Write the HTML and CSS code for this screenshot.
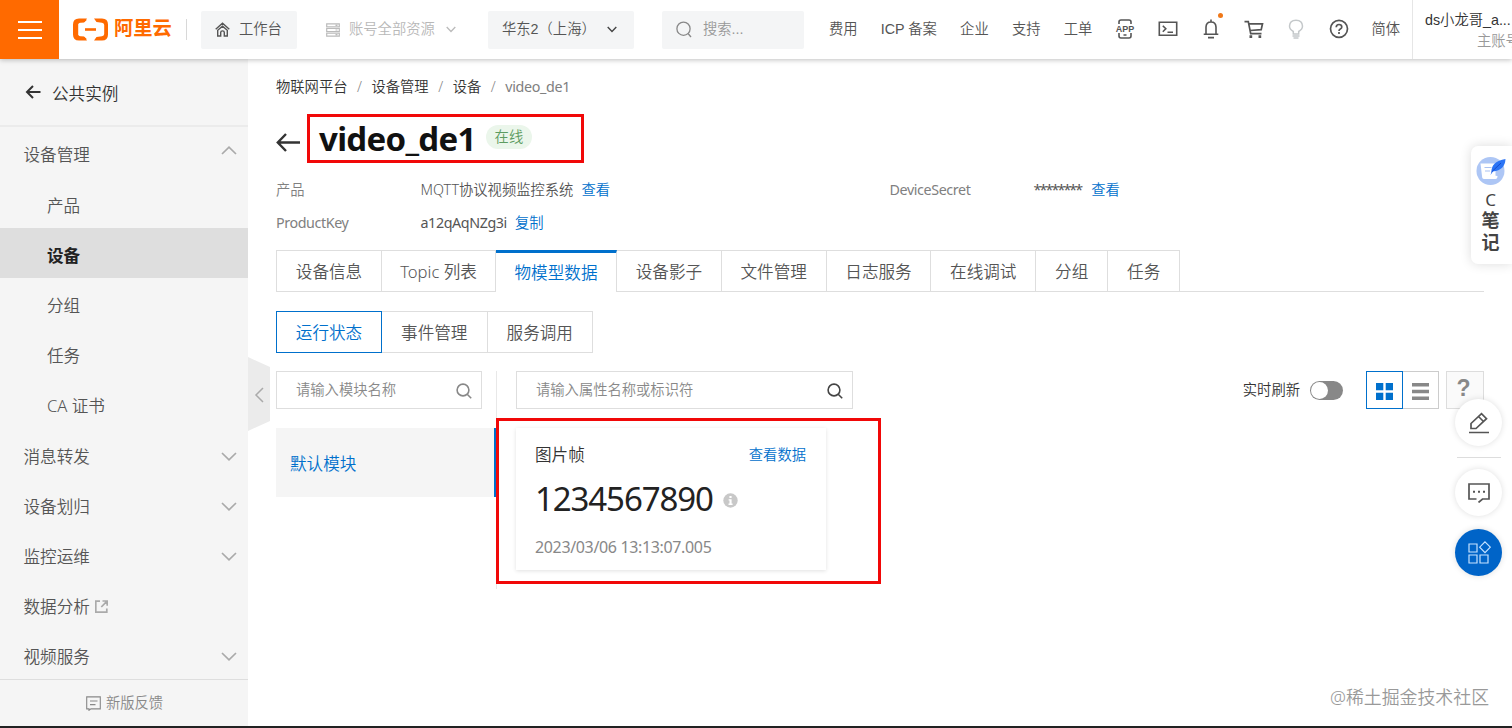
FILE: index.html
```html
<!DOCTYPE html>
<html lang="zh-CN">
<head>
  <meta charset="UTF-8">
  <meta name="viewport" content="width=device-width, initial-scale=1.0">
  <title>物联网平台 - 设备详情</title>
  <link rel="stylesheet" href="styles.css">
</head>
<body>
  <header class="topbar">
    <button class="menu-btn" aria-label="菜单"><span></span><span></span><span></span></button>
    <a class="logo">
      <svg width="35" height="23" viewBox="0 0 35 23" fill="none" stroke="#ff6a00">
        <path d="M14 1.800H7.500L2.200 5v13l5.300 3.200H14L11 18.500H7L5.200 17V6L7 4.500h4z" fill="#ff6a00" stroke="none"/>
        <path d="M14 .5H6Q0 .5 0 6.500v10q0 6 6 6h8l-2.500-3.500-5.500-.8Q3.800 17.800 3.800 16V7q0-1.800 2.200-2.200L11.500 4z" fill="#ff6a00" stroke="none"/>
        <path d="M21 .5h8q6 0 6 6v10q0 6-6 6h-8l2.500-3.500 5.500-.8q2.200-.4 2.200-2.200V7q0-1.800-2.200-2.200L23.500 4z" fill="#ff6a00" stroke="none"/>
        <path d="M12 11.500h11" stroke-width="2.600"/>
      </svg>
      <span>阿里云</span>
    </a>
    <i class="divider"></i>
    <a class="pill workbench">
      <svg width="15" height="15" viewBox="0 0 15 15" fill="none" stroke="#555" stroke-width="1.400">
        <path d="M.7 7.200 7.500 1.200l6.800 6M2.700 8v6h3v-3.500q0-1.600 1.800-1.600t1.800 1.600V14h3V8M2.700 8.200l4.800-4 4.800 4"/>
      </svg>
      <span>工作台</span>
    </a>
    <div class="resource">
      <svg width="14" height="14" viewBox="0 0 14 14" fill="none" stroke="#bbb" stroke-width="1.200">
        <path d="M.7.900h12.600v3H.7zM.7 5.500h12.600v3H.7zM.7 10.100h12.600v3H.7zM9.500 2.400h2M9.500 7h2M9.500 11.600h2"/>
      </svg>
      <span>账号全部资源</span>
      <svg class="caret" width="10" height="7" viewBox="0 0 10 7" fill="none" stroke="#bbb" stroke-width="1.300"><path d="m.7 1 4.300 4.500L9.300 1"/></svg>
    </div>
    <div class="pill region">
      <span>华东2（上海）</span>
      <svg width="10" height="7" viewBox="0 0 10 7" fill="none" stroke="#444" stroke-width="1.400"><path d="m.7 1 4.300 4.500L9.300 1"/></svg>
    </div>
    <div class="pill search">
      <svg width="16" height="17" viewBox="0 0 16 17" fill="none" stroke="#888" stroke-width="1.300"><circle cx="7.500" cy="7.700" r="6.600"/><path d="m12 12.500 3 3.500"/></svg>
      <span>搜索...</span>
    </div>
    <nav class="top-nav">
      <a>费用</a>
      <a>ICP 备案</a>
      <a>企业</a>
      <a>支持</a>
      <a>工单</a>
      <a class="icon">
        <svg width="20" height="20" viewBox="0 0 20 20" fill="none" stroke="#555" stroke-width="1.600">
          <path d="M4 5V3q0-2 2-2h8q2 0 2 2v2M4 14v3q0 2 2 2h8q2 0 2-2v-3M8.500 16h3"/>
          <text x="10" y="12.700" text-anchor="middle" class="app-text">APP</text>
        </svg>
      </a>
      <a class="icon">
        <svg width="20" height="20" viewBox="0 0 20 20" fill="none" stroke="#555" stroke-width="1.600"><path d="M1.300 3.300h17.400v13H1.300zM4.800 6.800l3 3-3 3M9.500 13.200h5.500"/></svg>
      </a>
      <a class="icon">
        <svg width="20" height="20" viewBox="0 0 20 20" fill="none" stroke="#555" stroke-width="1.600"><path d="M10 .5v2M5 15.300V8Q5.200 3 10 3t5 5v7.300M2.700 15.300h14.600M7 18.600h6"/></svg>
        <b class="dot"></b>
      </a>
      <a class="icon">
        <svg width="20" height="20" viewBox="0 0 20 20" fill="none" stroke="#555" stroke-width="1.700"><path d="M.5 2.600h3.800l2.400 12h10.800M4.800 4.800h13.700l-1.300 5.800L6 11.500"/><path d="M5.500 16.200h2.700v2.700H5.500zM14.500 16.200h2.700v2.700h-2.700z" fill="#555" stroke="none"/></svg>
      </a>
      <a class="icon">
        <svg width="20" height="20" viewBox="0 0 20 20" fill="none" stroke="#c4c8ca" stroke-width="1.500"><path d="M7.300 15v-2.500Q3.500 10.500 3.500 7.100 3.700 1.200 10 1.200t6.500 5.900q0 3.400-3.800 5.400V15zM6.500 17h7M7.500 19h5"/></svg>
      </a>
      <a class="icon">
        <svg width="20" height="20" viewBox="0 0 20 20" fill="none" stroke="#555" stroke-width="1.700"><circle cx="10" cy="9.800" r="8.500"/><path d="M7.200 8.200Q7.300 5.500 10 5.500t2.800 2.500q0 1.200-1.500 2.100-1.300.8-1.300 2M10 13v2"/></svg>
      </a>
      <a>简体</a>
    </nav>
    <div class="account">
      <span class="account-name">ds小龙哥_a...</span>
      <span class="account-type">主账号</span>
    </div>
  </header>

  <div class="layout">
    <aside class="sidebar">
      <div class="instance">
        <svg width="16" height="14" viewBox="0 0 16 14" fill="none" stroke="#333" stroke-width="2"><path d="M15.500 7H2M8 1 2 7l6 6"/></svg>
        <span>公共实例</span>
      </div>
      <ul class="menu">
        <li class="group open"><span>设备管理</span><svg width="16" height="9" viewBox="0 0 16 9"><path d="m1 8 7-6.800L15 8"/></svg></li>
        <li class="sub">产品</li>
        <li class="sub active">设备</li>
        <li class="sub">分组</li>
        <li class="sub">任务</li>
        <li class="sub">CA 证书</li>
        <li class="group"><span>消息转发</span><svg width="16" height="9" viewBox="0 0 16 9"><path d="m1 1 7 6.800L15 1"/></svg></li>
        <li class="group"><span>设备划归</span><svg width="16" height="9" viewBox="0 0 16 9"><path d="m1 1 7 6.800L15 1"/></svg></li>
        <li class="group"><span>监控运维</span><svg width="16" height="9" viewBox="0 0 16 9"><path d="m1 1 7 6.800L15 1"/></svg></li>
        <li class="group link"><span>数据分析</span><svg width="13" height="13" viewBox="0 0 13 13"><path d="M5 1.200H.8v11h11V8.500M7.500 1h4.700v4.700M12 1.200 6.300 7"/></svg></li>
        <li class="group"><span>视频服务</span><svg width="16" height="9" viewBox="0 0 16 9"><path d="m1 1 7 6.800L15 1"/></svg></li>
      </ul>
      <div class="feedback">
        <svg width="15" height="15" viewBox="0 0 15 15" fill="none" stroke="#888" stroke-width="1.100"><path d="M.7.900h13.600v12H5L3 14.300v-1.400H.7zM4 5h7.500M4 8.600h5.500"/></svg>
        <span>新版反馈</span>
      </div>
      <div class="collapse">
        <svg width="22" height="74" viewBox="0 0 22 74"><path d="M0 0 22 10v54L0 74z" fill="#ebebeb"/><path d="m15 31-7 7 7 7" fill="none" stroke="#aaa" stroke-width="1.500"/></svg>
      </div>
    </aside>

    <main class="content">
      <div class="breadcrumb">
        <a>物联网平台</a><i>/</i><a>设备管理</a><i>/</i><a>设备</a><i>/</i><span>video_de1</span>
      </div>
      <div class="title-row">
        <svg width="24" height="19" viewBox="0 0 24 19" fill="none" stroke="#333" stroke-width="2.400"><path d="M24 9.500H2M10 1 1.800 9.500 10 18"/></svg>
        <div class="title-box">
          <h1>video_de1</h1>
          <span class="status">在线</span>
        </div>
      </div>
      <dl class="info">
        <dt>产品</dt>
        <dd><span>MQTT协议视频监控系统</span><a>查看</a></dd>
        <dt class="latin">DeviceSecret</dt>
        <dd><span class="secret">********</span><a>查看</a></dd>
        <dt class="latin">ProductKey</dt>
        <dd><span class="latin">a12qAqNZg3i</span><a>复制</a></dd>
      </dl>

      <div class="tabs">
        <a>设备信息</a>
        <a class="topic">Topic 列表</a>
        <a class="active">物模型数据</a>
        <a>设备影子</a>
        <a>文件管理</a>
        <a>日志服务</a>
        <a>在线调试</a>
        <a>分组</a>
        <a>任务</a>
      </div>
      <div class="sub-tabs">
        <a class="active">运行状态</a>
        <a>事件管理</a>
        <a>服务调用</a>
      </div>

      <div class="panel">
        <section class="modules">
          <div class="input">
            <span>请输入模块名称</span>
            <svg width="16" height="16" viewBox="0 0 16 16" fill="none" stroke="#888" stroke-width="1.600"><circle cx="7" cy="7" r="5.900"/><path d="m11.200 11.200 4 4"/></svg>
          </div>
          <div class="module-item">默认模块</div>
        </section>
        <section class="props">
          <div class="toolbar">
            <div class="input prop-input">
              <span>请输入属性名称或标识符</span>
              <svg width="16" height="16" viewBox="0 0 16 16" fill="none" stroke="#444" stroke-width="1.600"><circle cx="7" cy="7" r="5.900"/><path d="m11.200 11.200 4 4"/></svg>
            </div>
            <div class="actions">
              <span>实时刷新</span>
              <i class="switch"></i>
              <button class="view-btn active"><svg width="17" height="17" viewBox="0 0 17 17" fill="#0070cc"><path d="M0 0h7.300v7.300H0zM9.700 0H17v7.300H9.700zM0 9.700h7.300V17H0zM9.700 9.700H17V17H9.700z"/></svg></button>
              <button class="view-btn list"><svg width="17" height="17" viewBox="0 0 17 17" fill="#888"><path d="M0 0h17v3.500H0zM0 6.700h17v3.500H0zM0 13.400h17v3.500H0z"/></svg></button>
              <button class="view-btn help">?</button>
            </div>
          </div>
          <div class="card">
            <div class="card-head"><span>图片帧</span><a>查看数据</a></div>
            <div class="card-value">
              <strong>1234567890</strong>
              <svg width="15" height="15" viewBox="0 0 15 15"><circle cx="7.500" cy="7.500" r="7.200" fill="#c8c8c8"/><path d="M6.400 3h2.200v2H6.400zM5.600 6.200h3v4.400h1V12H5.500v-1.400h1V7.500h-.9z" fill="#fff"/></svg>
            </div>
            <div class="card-time">2023/03/06 13:13:07.005</div>
            <div class="mark"></div>
          </div>
        </section>
      </div>
    </main>
  </div>
  <div class="bottom-line"></div>

  <!-- floating tools -->
  <div class="note">
    <svg width="30" height="28" viewBox="0 0 30 28">
      <circle cx="14.500" cy="14" r="14" fill="#adc6f5"/>
      <path d="M4.500 6.500h15v12.300l2 .2q0 3-2 3H8q-2 0-2-3z" fill="#fff"/>
      <path d="M8.500 10.500h7M9 14h5" stroke="#a9c2f2" stroke-width="1.200"/>
      <path d="M15.500 15Q15 4.500 29.500 2q-.5 11-12.500 12.500L14.500 18z" fill="#2b74f5"/>
      <path d="M15.500 15 25 6" stroke="#174bcd" stroke-width="1"/>
    </svg>
    <span>C</span>
    <b>笔</b>
    <b>记</b>
  </div>
  <div class="float-tools">
    <a class="circle">
      <svg width="22" height="22" viewBox="0 0 22 22" fill="none" stroke="#555" stroke-width="1.700"><path d="M1 20.500h20M3 16.500v-5L13.500 1.700l5 5L8 16.500zM10.500 4.500l5 5"/></svg>
    </a>
    <i class="float-line"></i>
    <a class="circle">
      <svg width="22" height="20" viewBox="0 0 22 20" fill="none" stroke="#555" stroke-width="1.700"><path d="M8.500 16H1V1h20v15h-6.500L10.500 19.500"/><path d="M5 8.700h2M10 8.700h2M15 8.700h2" stroke-width="2"/></svg>
    </a>
    <a class="circle apps">
      <svg width="24" height="24" viewBox="0 0 24 24" fill="none" stroke="#c5e2ff" stroke-width="1.200"><path d="M2 3h8v8H2zM2 14h8v8H2zM13 14h8v8h-8zM18 .8l5.300 5.400-5.300 5.400-5.300-5.400z"/></svg>
    </a>
  </div>
  <div class="watermark">@稀土掘金技术社区</div>
</body>
</html>
```
FILE: styles.css
```css
:root {
  --blue: #0070cc;
  --orange: #ff6a00;
  --red: #f10808;
  --text: #333;
  --text-muted: #808080;
  --border: #dedede;
}

* {
  box-sizing: border-box;
}

body {
  margin: 0;
  width: 1512px;
  height: 728px;
  overflow: hidden;
  position: relative;
  background: #fff;
  color: var(--text);
  font-family: "Noto Sans", "Noto Sans CJK SC", sans-serif;
  font-size: 14.3px;
  font-weight: 350;
  line-height: 20px;
  white-space: nowrap;
}

svg {
  display: block;
  flex: none;
}

i {
  font-style: normal;
}

a {
  cursor: pointer;
}

button {
  padding: 0;
  border: none;
  border-radius: 0;
}

/* top bar */
.topbar {
  display: flex;
  align-items: center;
  height: 59px;
  position: relative;
  z-index: 2;
  background: #fff;
  box-shadow: 0 1px 5px rgba(0, 0, 0, 0.25);
  color: #555;
  font-family: "Liberation Sans", "Noto Sans CJK SC", sans-serif;
}

.topbar > * > span,
.top-nav > a {
  margin-top: -1px;
}

.menu-btn {
  display: flex;
  flex-direction: column;
  align-items: center;
  justify-content: center;
  gap: 6px;
  width: 59px;
  height: 59px;
  background: var(--orange);
}

.menu-btn span {
  width: 24px;
  height: 2px;
  margin: 0;
  background: #fff;
}

.logo {
  display: flex;
  align-items: center;
  gap: 6px;
  margin-left: 14px;
  width: 113px;
  color: var(--orange);
  font-size: 19.3px;
  font-weight: 700;
}

.divider {
  width: 1px;
  height: 21px;
  background: #d8d8d8;
}

.pill {
  display: flex;
  align-items: center;
  height: 38px;
  background: #f4f5f6;
  border-radius: 2px;
}

.workbench {
  gap: 9px;
  width: 96px;
  margin-left: 14px;
  padding-left: 14px;
}

.resource {
  display: flex;
  align-items: center;
  gap: 9px;
  width: 191px;
  padding-left: 29px;
  color: #b8b8b8;
}

.caret {
  margin-left: 2px;
}

.region {
  justify-content: space-between;
  width: 146px;
  padding: 0 17px 0 14px;
}

.search {
  gap: 11px;
  width: 142px;
  margin-left: 28px;
  padding-left: 14px;
  color: #999;
}

.top-nav {
  display: flex;
  align-items: center;
  gap: 23.2px;
  width: 583px;
  margin-left: 25px;
}

.icon {
  width: 19.5px;
  position: relative;
}

.app-text {
  font-size: 9px;
  font-weight: 700;
  fill: #555;
  stroke: none;
}

.dot {
  position: absolute;
  top: -6px;
  right: -3px;
  width: 5px;
  height: 5px;
  border-radius: 50%;
  background: #f07818;
}

.account {
  flex: 1;
  min-width: 0;
  height: 59px;
  padding: 11px 0 0 12px;
  overflow: hidden;
  border-left: 1px solid #e6e6e6;
}

.account-name {
  display: block;
  color: #333;
}

.account-type {
  display: block;
  padding: 2px 0 0 52px;
  color: #999;
}

/* sidebar */
.layout {
  display: flex;
  height: 667px;
}

.sidebar {
  display: flex;
  flex-direction: column;
  flex: none;
  width: 248px;
  position: relative;
  background: #f5f5f5;
  font-size: 16.6px;
}

.instance {
  display: flex;
  align-items: center;
  gap: 11px;
  height: 69px;
  padding: 3px 0 0 25px;
  border-bottom: 2px solid #ebebeb;
}

.instance svg {
  margin-top: -3px;
}

.menu {
  flex: 1;
  margin: 0;
  padding: 0;
  list-style: none;
  color: #555;
}

.menu li {
  display: flex;
  align-items: center;
  height: 50.2px;
  padding-top: 6px;
}

.group {
  justify-content: space-between;
  padding: 0 11px 0 23.5px;
}

.group svg {
  margin-top: -1px;
  fill: none;
  stroke: #aaa;
  stroke-width: 1.7;
}

.open svg {
  margin-top: -10px;
}

.menu .link {
  justify-content: flex-start;
  gap: 5px;
}

.menu .sub {
  padding-left: 47px;
}

.menu .active {
  background: #dedede;
  color: #222;
  font-weight: 700;
}

.feedback {
  display: flex;
  align-items: center;
  justify-content: center;
  gap: 5px;
  height: 47px;
  padding-left: 1px;
  border-top: 1px solid #dedede;
  color: #888;
  font-size: 14.3px;
}

.collapse {
  position: absolute;
  left: 248px;
  top: 298px;
}

/* content */
.content {
  flex: 1;
  padding: 18px 28px 0;
}

.breadcrumb {
  display: flex;
}

.breadcrumb i {
  width: 24px;
  text-align: center;
  color: #888;
}

.breadcrumb span {
  color: var(--text-muted);
  font-weight: 400;
  letter-spacing: -0.35px;
}

.title-row {
  display: flex;
  align-items: center;
  height: 49px;
  margin-top: 17px;
  gap: 7px;
}

.title-row > svg {
  margin-top: 8px;
}

.title-box {
  display: flex;
  align-items: center;
  gap: 10px;
  width: 277px;
  height: 49px;
  padding-left: 9px;
  border: 3px solid var(--red);
}

h1 {
  margin: 0;
  color: #111;
  font-size: 33px;
  line-height: 43px;
  font-weight: 700;
  letter-spacing: -0.7px;
}

.status {
  height: 24px;
  margin-top: -4px;
  padding: 0 9px;
  border-radius: 12px;
  background: #ebf6eb;
  color: #5d9c61;
  line-height: 24px;
}

.info {
  display: grid;
  grid-template-columns: 144.5px 469px 144px 1fr;
  row-gap: 13px;
  margin: 17px 0 0;
}

.info dt {
  color: var(--text-muted);
}

.info dd {
  display: flex;
  gap: 8px;
  margin: 0;
  color: #555;
}

.latin {
  font-weight: 400;
  letter-spacing: -0.4px;
}

.secret {
  font-weight: 400;
  letter-spacing: -1.9px;
  margin-right: 2px;
}

.info a,
.card a {
  color: var(--blue);
}

.tabs {
  display: flex;
  height: 42px;
  margin-top: 17px;
  border-bottom: 1px solid var(--border);
  font-size: 16.6px;
}

.tabs a,
.sub-tabs a {
  display: flex;
  align-items: center;
  justify-content: center;
  width: 104.8px;
  padding-top: 2px;
  border: 1px solid var(--border);
  border-width: 1px 1px 0 0;
  color: #555;
}

.tabs a:first-child {
  width: 106px;
  border-left-width: 1px;
}

.tabs a:nth-last-child(-n+2) {
  width: 72px;
}

.tabs .topic {
  width: 114px;
}

.tabs .active {
  width: 121px;
  height: 42px;
  padding: 0;
  border-top: 3px solid var(--blue);
  background: #fff;
  color: var(--blue);
}

.sub-tabs {
  display: flex;
  height: 42px;
  margin-top: 19px;
  font-size: 16.6px;
}

.sub-tabs a {
  width: 105.5px;
  border-width: 1px 1px 1px 0;
}

.sub-tabs .active {
  width: 106px;
  border: 1px solid var(--blue);
  color: var(--blue);
}

.panel {
  display: flex;
  height: 218px;
  margin-top: 18px;
}

.modules {
  width: 221px;
  border-right: 1px solid #e8e8e8;
}

.input {
  display: flex;
  align-items: center;
  justify-content: space-between;
  width: 206px;
  height: 38px;
  padding: 0 9px 0 19px;
  border: 1px solid var(--border);
  color: #888;
}

.input svg {
  margin-top: 2px;
}

.prop-input {
  width: 337px;
}

.module-item {
  width: 221px;
  height: 69px;
  margin-top: 19px;
  padding-left: 14px;
  background: #f5f5f5;
  border-right: 3px solid var(--blue);
  color: var(--blue);
  font-size: 16.6px;
  line-height: 72px;
}

.props {
  flex: 1;
  padding-left: 19px;
}

.toolbar {
  display: flex;
  justify-content: space-between;
}

.actions {
  display: flex;
  align-items: center;
}

.switch {
  width: 33px;
  height: 19px;
  margin: 0 23px 0 10px;
  padding: 1px;
  border-radius: 10px;
  background: #888;
}

.switch::before {
  content: "";
  display: block;
  width: 17px;
  height: 17px;
  border-radius: 50%;
  background: #fff;
}

.view-btn {
  display: flex;
  align-items: center;
  justify-content: center;
  width: 37px;
  height: 38px;
  border: 1px solid #ccc;
  background: #fff;
}

.view-btn svg {
  margin-top: 3px;
}

.view-btn.active {
  border-color: var(--blue);
}

.view-btn.list {
  width: 36px;
  border-left: none;
}

.view-btn.help {
  width: 38px;
  margin-left: 7px;
  padding: 0 3px 3px 0;
  background: #fafafa;
  border-color: #ddd;
  color: #888;
  font: 700 23px "Liberation Sans", sans-serif;
}

.card {
  position: relative;
  width: 310px;
  height: 142px;
  margin-top: 19px;
  padding: 17px 20px 0 19px;
  background: #fff;
  box-shadow: 0 1px 4px rgba(0, 0, 0, 0.12);
}

.card-head {
  display: flex;
  align-items: center;
  justify-content: space-between;
}

.card-head span {
  font-size: 16.6px;
}

.card-value {
  display: flex;
  align-items: center;
  gap: 10px;
  height: 48px;
  margin-top: 10px;
}

.card-value strong {
  color: #222;
  font-size: 33px;
  font-weight: 400;
  letter-spacing: -1.1px;
}

.card-value svg {
  margin-top: 3px;
}

.card-time {
  margin-top: 14px;
  color: #888;
  font-size: 16px;
  font-weight: 400;
  letter-spacing: -0.35px;
}

.mark {
  position: absolute;
  left: -20px;
  top: -10px;
  width: 385px;
  height: 166px;
  border: 3px solid var(--red);
}

.bottom-line {
  height: 2px;
  background: #222;
}

/* floating tools */
.note {
  display: flex;
  flex-direction: column;
  align-items: center;
  position: absolute;
  right: 0;
  top: 146px;
  width: 41px;
  height: 118px;
  padding: 11px 2px 0 0;
  border-radius: 7px 0 0 7px;
  background: #fff;
  box-shadow: 0 0 12px rgba(0, 0, 0, 0.14);
  color: #444;
}

.note span {
  margin-top: 5px;
  font-size: 17px;
  font-weight: 400;
  line-height: 19px;
}

.note b {
  font-size: 18px;
  line-height: 22px;
}

.float-tools {
  display: flex;
  flex-direction: column;
  align-items: center;
  position: absolute;
  left: 1455px;
  top: 399px;
  width: 47px;
}

.circle {
  display: flex;
  align-items: center;
  justify-content: center;
  width: 47px;
  height: 47px;
  border-radius: 50%;
  background: #fff;
  box-shadow: 0 0 6px rgba(0, 0, 0, 0.13);
}

.float-line {
  width: 44px;
  height: 1px;
  margin: 11px 0;
  background: #ddd;
}

.apps {
  margin-top: 13px;
  background: #0064c8;
}

.watermark {
  position: absolute;
  left: 1330px;
  top: 687px;
  color: #999;
  font-size: 17.9px;
}
```
